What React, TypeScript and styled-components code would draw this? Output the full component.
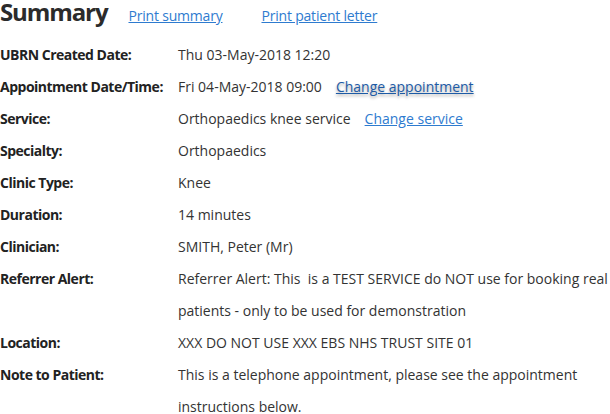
import styled, { createGlobalStyle } from 'styled-components'
import { Fragment } from 'react'

const GlobalStyle = createGlobalStyle`
  body {
    margin: 0;
    background: #fff;
    font-family: "Open Sans", "Noto Sans", sans-serif;
    color: #222;
  }
`

const Page = styled.div`
  width: 610px;
`

const Header = styled.header`
  display: flex;
  align-items: baseline;
  height: 28px;
  margin: -2px 0 13px;
`

const Title = styled.h1`
  margin: 0;
  font-size: 24px;
  line-height: 28px;
  font-weight: 700;
  letter-spacing: -1.1px;
  color: #2b2b2b;
  margin-right: 21px;
`

const Link = styled.a<{ $focused?: boolean }>`
  font-size: 14px;
  color: ${p => (p.$focused ? '#1d5ba6' : '#2e7bcf')};
  text-decoration: underline;
  cursor: pointer;
  text-shadow: ${p => (p.$focused ? '0 2px 3px rgba(0,0,0,0.35)' : 'none')};
`

const HeaderLink = styled(Link)`
  margin-right: 39px;
  letter-spacing: -0.2px;
`

const Details = styled.dl`
  display: grid;
  grid-template-columns: 178px 1fr;
  margin: 0;
  font-size: 14px;
  line-height: 32px;
`

const Label = styled.dt`
  font-weight: 700;
  letter-spacing: -0.5px;
  color: #222;
`

const Value = styled.dd`
  margin: 0;
  color: #333;
`

const Gap = styled.span`
  display: inline-block;
  width: 14px;
`

type Row = { label: string; value: string; link?: string; focused?: boolean }

const rows: Row[] = [
  { label: 'UBRN Created Date:', value: 'Thu 03-May-2018 12:20' },
  { label: 'Appointment Date/Time:', value: 'Fri 04-May-2018 09:00', link: 'Change appointment', focused: true },
  { label: 'Service:', value: 'Orthopaedics knee service', link: 'Change service' },
  { label: 'Specialty:', value: 'Orthopaedics' },
  { label: 'Clinic Type:', value: 'Knee' },
  { label: 'Duration:', value: '14 minutes' },
  { label: 'Clinician:', value: 'SMITH, Peter (Mr)' },
  {
    label: 'Referrer Alert:',
    value: 'Referrer Alert: This \u00a0is a TEST SERVICE do NOT use for booking real patients - only to be used for demonstration',
  },
  { label: 'Location:', value: 'XXX DO NOT USE XXX EBS NHS TRUST SITE 01' },
  {
    label: 'Note to Patient:',
    value: 'This is a telephone appointment, please see the appointment instructions below.',
  },
]

export default function App() {
  return (
    <Page>
      <GlobalStyle />
      <Header>
        <Title>Summary</Title>
        <HeaderLink>Print summary</HeaderLink>
        <HeaderLink>Print patient letter</HeaderLink>
      </Header>
      <Details>
        {rows.map(row => (
          <Fragment key={row.label}>
            <Label>{row.label}</Label>
            <Value>
              {row.value}
              {row.link && (
                <>
                  <Gap />
                  <Link $focused={row.focused}>{row.link}</Link>
                </>
              )}
            </Value>
          </Fragment>
        ))}
      </Details>
    </Page>
  )
}
